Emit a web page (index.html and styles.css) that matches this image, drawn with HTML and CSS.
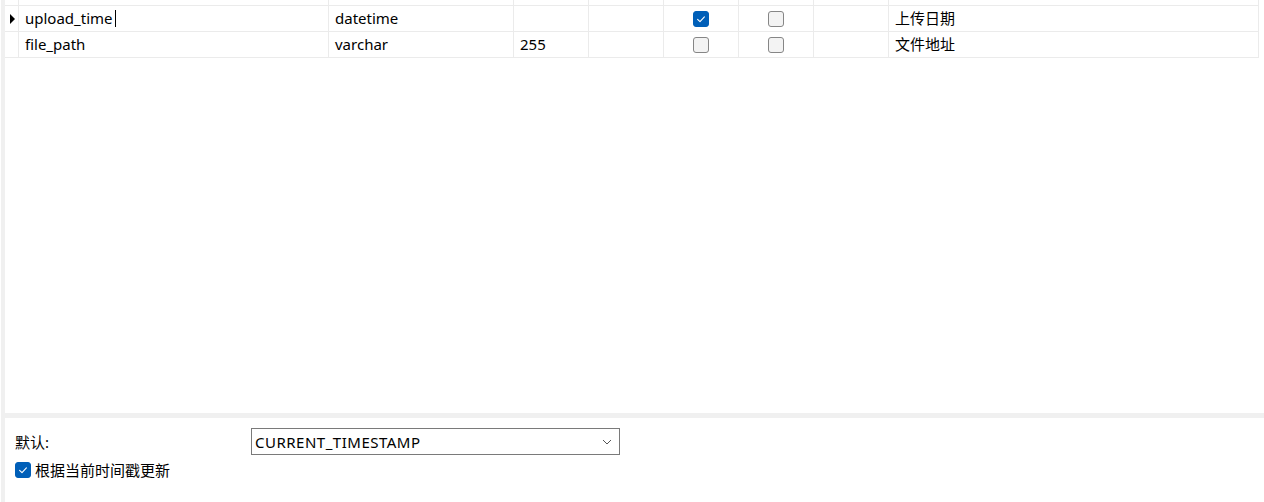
FILE: index.html
```html
<!DOCTYPE html>
<html>
<head>
<meta charset="utf-8">
<link rel="stylesheet" href="styles.css">
</head>
<body>
<div class="app">
  <div class="strip"></div>
  <div class="main">
    <div class="grid-area">
      <div class="grid">
        <div class="row">
          <div class="cell ind"></div>
          <div class="cell">stored_name</div>
          <div class="cell"></div>
          <div class="cell"></div>
          <div class="cell"></div>
          <div class="cell center"></div>
          <div class="cell center"></div>
          <div class="cell"></div>
          <div class="cell"></div>
        </div>
        <div class="row">
          <div class="cell ind"><span class="tri"></span></div>
          <div class="cell">upload_time<span class="caret"></span></div>
          <div class="cell">datetime</div>
          <div class="cell"></div>
          <div class="cell"></div>
          <div class="cell center"><span class="cb checked"><svg viewBox="0 0 16 16" width="16" height="16"><path d="M4.6 8.3 L7 10.6 L11.4 5.8" fill="none" stroke="#fff" stroke-width="1.1" stroke-linecap="round" stroke-linejoin="round"/></svg></span></div>
          <div class="cell center"><span class="cb"></span></div>
          <div class="cell"></div>
          <div class="cell">上传日期</div>
        </div>
        <div class="row">
          <div class="cell ind"></div>
          <div class="cell">file_path</div>
          <div class="cell">varchar</div>
          <div class="cell">255</div>
          <div class="cell"></div>
          <div class="cell center"><span class="cb"></span></div>
          <div class="cell center"><span class="cb"></span></div>
          <div class="cell"></div>
          <div class="cell">文件地址</div>
        </div>
      </div>
    </div>
    <div class="separator"></div>
    <div class="props">
      <div class="prop-row">
        <span class="label">默认:</span>
        <div class="select">
          <span class="select-text">CURRENT_TIMESTAMP</span>
          <svg class="chev" viewBox="0 0 10 6" width="10" height="6"><path d="M1 1 L5 5 L9 1" fill="none" stroke="#555" stroke-width="1"/></svg>
        </div>
      </div>
      <label class="check-row">
        <span class="cb checked"><svg viewBox="0 0 16 16" width="16" height="16"><path d="M4.6 8.3 L7 10.6 L11.4 5.8" fill="none" stroke="#fff" stroke-width="1.1" stroke-linecap="round" stroke-linejoin="round"/></svg></span>
        <span>根据当前时间戳更新</span>
      </label>
    </div>
  </div>
</div>
</body>
</html>
```
FILE: styles.css
```css
* { box-sizing: border-box; }
html, body { margin: 0; padding: 0; background: #fff; }
body {
  font-family: "Segoe UI", "Noto Sans", "Noto Sans CJK SC", sans-serif;
  font-size: 15px;
  color: #000;
}
.app {
  display: flex;
  height: 502px;
  width: 1264px;
  padding-left: 1px;
}
.strip {
  width: 4px;
  background: #f0f0f0;
  flex: none;
}
.main {
  flex: 1;
  display: flex;
  flex-direction: column;
}
.grid-area {
  height: 413px;
  overflow: hidden;
}
.grid {
  margin-top: -20px;
  width: 1254px;
}
.row {
  display: grid;
  grid-template-columns: 14px 310px 185px 75px 75px 75px 75px 75px 370px;
  height: 26px;
}
.cell {
  border-right: 1px solid #ebebeb;
  border-bottom: 1px solid #ebebeb;
  padding-left: 6px;
  display: flex;
  align-items: center;
  white-space: nowrap;
  overflow: hidden;
  line-height: 25px;
}
.cell.ind { padding-left: 5px; }
.cell.center { justify-content: center; padding-left: 0; padding-right: 1px; }
.tri {
  width: 0;
  height: 0;
  border-left: 5px solid #000;
  border-top: 5px solid transparent;
  border-bottom: 5px solid transparent;
}
.caret {
  display: inline-block;
  width: 1px;
  height: 17px;
  background: #000;
  margin-left: 2px;
}
.cb {
  width: 16px;
  height: 16px;
  border: 1px solid #868686;
  border-radius: 3px;
  background: #f3f3f3;
  display: inline-flex;
  flex: none;
}
.cb.checked {
  background: #005fb8;
  border-color: #005fb8;
}
.cb svg { margin: -1px; }
.separator {
  height: 5px;
  background: #f0f0f0;
}
.props {
  flex: 1;
  padding: 10px 0 0 10px;
  display: flex;
  flex-direction: column;
}
.prop-row {
  display: flex;
  align-items: center;
}
.label { width: 236px; }
.select {
  width: 369px;
  height: 27px;
  border: 1px solid #7a7a7a;
  display: flex;
  align-items: center;
  justify-content: space-between;
  padding: 0 7px 0 3px;
}
.select-text { letter-spacing: 0.5px; }
.check-row {
  display: flex;
  align-items: center;
  gap: 4px;
  height: 16px;
  line-height: 16px;
  margin-top: 7px;
}
```
